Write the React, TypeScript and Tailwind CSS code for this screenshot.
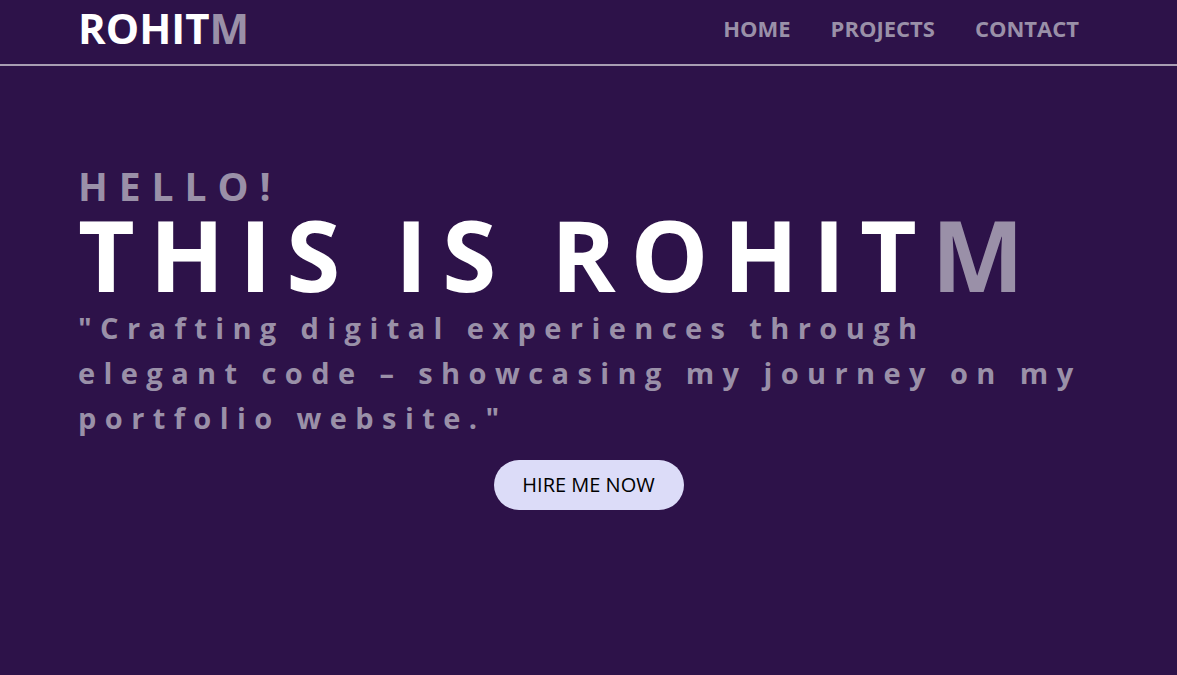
export default function App() {
  const font = { fontFamily: "'Open Sans', Lato, sans-serif" };
  return (
    <div className="min-h-screen bg-[#2d1249] text-white" style={font}>
      <header className="flex h-[66px] items-center justify-between border-b-2 border-[#a89db3] pb-2 pl-[78px] pr-[98px]">
        <div className="text-[42px] font-bold leading-none">
          ROHIT<span className="text-[#9a90a8]">M</span>
        </div>
        <nav className="flex gap-10 text-[22px] font-bold text-[#9a90a8]">
          <a href="#">HOME</a>
          <a href="#">PROJECTS</a>
          <a href="#">CONTACT</a>
        </nav>
      </header>

      <main className="px-[78px] pt-[100px]">
        <p className="text-[39px] font-bold leading-none tracking-[0.28em] text-[#9a90a8]">HELLO!</p>
        <h1 className="text-[98px] font-bold leading-none tracking-[0.15em]">
          THIS IS ROHIT<span className="text-[#9a90a8]">M</span>
        </h1>
        <p className="mt-[2px] max-w-[1010px] text-[29px] font-bold leading-[45px] tracking-[0.29em] text-[#9a90a8]">
          "Crafting digital experiences through elegant code – showcasing my journey on my portfolio website."
        </p>
        <div className="mt-[20px] flex justify-center">
          <button className="h-[50px] w-[190px] rounded-full bg-[#dcdcf8] text-[20px] text-black">HIRE ME NOW</button>
        </div>
      </main>
    </div>
  );
}
